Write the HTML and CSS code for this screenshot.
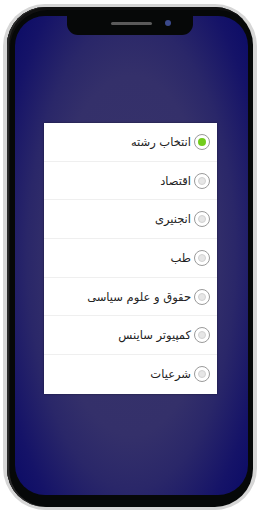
FILE: index.html
```html
<!DOCTYPE html>
<html lang="fa" dir="rtl">

<head>
  <meta charset="UTF-8">
  <meta name="viewport" content="width=device-width, initial-scale=1.0">
  <title>انتخاب رشته</title>
  <link rel="stylesheet" href="styles.css">
</head>

<body>
  <!-- قاب گوشی -->
  <div class="phone">
    <div class="bezel">
      <div class="screen">
        <div class="notch">
          <span class="speaker"></span>
          <span class="camera"></span>
        </div>

        <!-- لیست رشته ها -->
        <div class="card">
          <label class="row">
            <span class="radio checked"></span>
            <span class="label">انتخاب رشته</span>
          </label>
          <label class="row">
            <span class="radio"></span>
            <span class="label">اقتصاد</span>
          </label>
          <label class="row">
            <span class="radio"></span>
            <span class="label">انجنیری</span>
          </label>
          <label class="row">
            <span class="radio"></span>
            <span class="label">طب</span>
          </label>
          <label class="row">
            <span class="radio"></span>
            <span class="label">حقوق و علوم سیاسی</span>
          </label>
          <label class="row">
            <span class="radio"></span>
            <span class="label">کمپیوتر ساینس</span>
          </label>
          <label class="row">
            <span class="radio"></span>
            <span class="label">شرعیات</span>
          </label>
        </div>
      </div>
    </div>
  </div>
</body>

</html>
```

FILE: styles.css
```css
body {
  margin: 0;
  background: #fff;
  font-family: "DejaVu Sans", sans-serif;
}

.phone {
  width: 254px;
  height: 506px;
  margin: 4px 2px 0 3px;
  box-sizing: border-box;
  padding: 3px 4px 3px 4px;
  background: #d6d6d6;
  border-radius: 42px;
}

.bezel {
  height: 100%;
  box-sizing: border-box;
  padding: 9px 5px 12px 8px;
  background: #060808;
  border-radius: 38px;
  box-shadow: inset 2px 0 0 #2a2a2a, inset 3px 3px 0 #111;
}

.screen {
  position: relative;
  height: 100%;
  border-radius: 30px;
  background: radial-gradient(ellipse 160px 360px at 50% 50%, #37336b 0%, #34306a 50%, #2a2769 65%, #151368 85%, #0a0a66 100%);
  display: flex;
  flex-direction: column;
  align-items: flex-start;
  overflow: hidden;
}

.notch {
  position: absolute;
  top: 0;
  left: 52px;
  width: 126px;
  height: 19px;
  background: #060808;
  border-radius: 0 0 11px 11px;
}

.speaker {
  position: absolute;
  top: 6px;
  left: 44px;
  width: 41px;
  height: 3px;
  background: #5a5a5a;
  border-radius: 2px;
}

.camera {
  position: absolute;
  top: 4px;
  left: 98px;
  width: 6px;
  height: 6px;
  background: #3b4a8c;
  border-radius: 50%;
}

.card {
  margin-top: 107px;
  margin-right: 31px;
  width: 173px;
  background: #fff;
  box-shadow: 0 0 2px rgba(0, 0, 0, 0.5);
}

.row {
  display: flex;
  align-items: center;
  height: 38.7px;
  box-sizing: border-box;
  padding-right: 7px;
  border-bottom: 1px solid #efefef;
  font-size: 11.5px;
  color: #222;
}

.row:last-child {
  border-bottom: none;
}

.radio {
  width: 16px;
  height: 16px;
  box-sizing: border-box;
  border: 1px solid #9a9a9a;
  border-radius: 50%;
  display: flex;
  align-items: center;
  justify-content: center;
  margin-left: 3px;
}

.radio::after {
  content: "";
  width: 6px;
  height: 6px;
  border-radius: 50%;
  background: #e6e6e6;
  border: 1px solid #d2d2d2;
}

.radio.checked::after {
  width: 8px;
  height: 8px;
  border: none;
  background: #72cc1c;
}
```
